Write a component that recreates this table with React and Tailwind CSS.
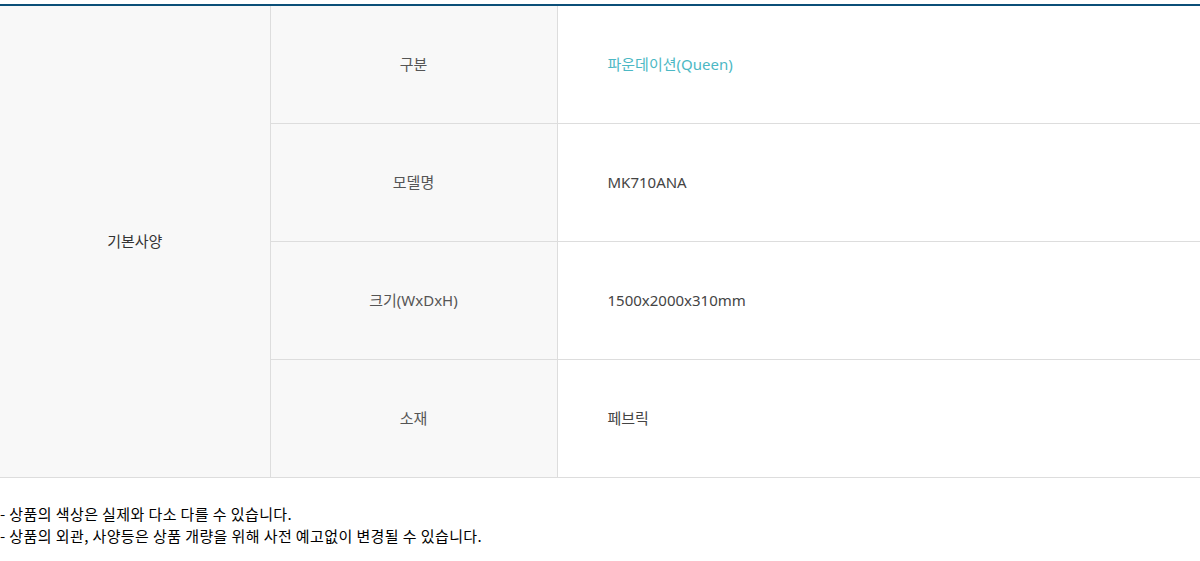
import React from 'react';

const font = { fontFamily: '"Noto Sans", "Noto Sans CJK KR", sans-serif' };

const rows = [
  { label: '구분', value: '파운데이션(Queen)', accent: true },
  { label: '모델명', value: 'MK710ANA' },
  { label: '크기(WxDxH)', value: '1500x2000x310mm' },
  { label: '소재', value: '페브릭' },
];

export default function App() {
  return (
    <div className="w-[1200px] bg-white pt-1" style={font}>
      <table className="w-full border-collapse border-t-2 border-t-[#0b4f78] text-[15px] text-[#444]">
        <colgroup>
          <col className="w-[270px]" />
          <col className="w-[287px]" />
          <col />
        </colgroup>
        <tbody>
          {rows.map((row, i) => (
            <tr key={row.label} className="h-[118px]">
              {i === 0 && (
                <th
                  rowSpan={rows.length}
                  className="border-r border-b border-[#dddddd] bg-[#f8f8f8] font-normal text-[#333]"
                >
                  기본사양
                </th>
              )}
              <th className="border-r border-b border-[#dddddd] bg-[#f8f8f8] font-normal text-[#555]">
                {row.label}
              </th>
              <td
                className={`border-b border-[#dddddd] pl-[50px] text-left ${
                  row.accent ? 'text-[#4cb8c4]' : 'text-[#444]'
                }`}
              >
                {row.value}
              </td>
            </tr>
          ))}
        </tbody>
      </table>
      <div
        className="pt-[25px] text-[15px] leading-[22px] tracking-[0.4px] text-black"
        style={{ fontFamily: '"Noto Sans CJK KR", sans-serif' }}
      >
        <p>- 상품의 색상은 실제와 다소 다를 수 있습니다.</p>
        <p>- 상품의 외관, 사양등은 상품 개량을 위해 사전 예고없이 변경될 수 있습니다.</p>
      </div>
    </div>
  );
}
